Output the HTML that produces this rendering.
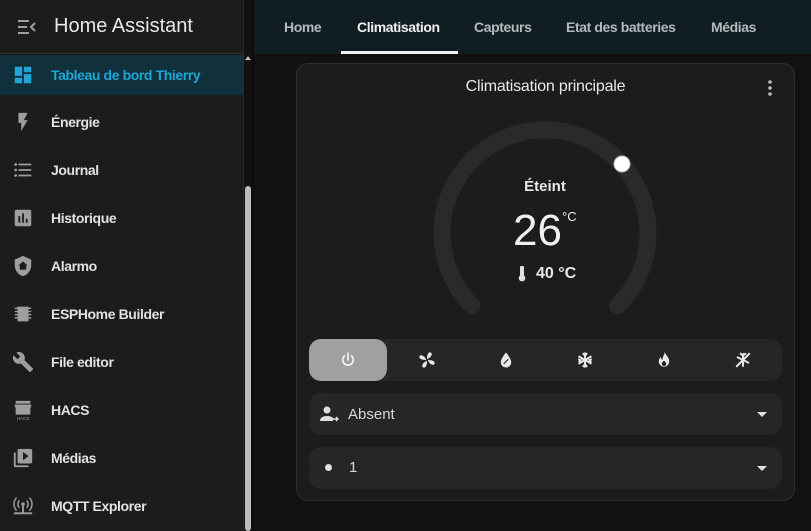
<!DOCTYPE html>
<html><head><meta charset="utf-8"><style>
*{margin:0;padding:0;box-sizing:border-box}
body{width:811px;height:531px;overflow:hidden;background:#111111;font-family:"Liberation Sans",sans-serif;position:relative;color:#e1e1e1}
.abs{position:absolute}
#side{left:0;top:0;width:244px;height:531px;background:#1c1c1c;border-right:1px solid #2a2a2a}
.nav{position:absolute;left:0;width:243px;height:40px;display:flex;align-items:center}
.nav svg{position:absolute;left:12px;width:22px;height:22px;fill:#9e9e9e}
.nav span{position:absolute;left:51px;font-size:14px;font-weight:bold;color:#e1e1e1;letter-spacing:-0.4px}
.tab{position:absolute;top:19px;font-size:14px;font-weight:bold;color:#b4b9bc;letter-spacing:-0.4px}
.row{position:absolute;left:309px;width:473px;height:42px;background:#262626;border-radius:12px}
.mb{position:absolute;top:0;width:78px;height:42px;display:flex;align-items:center;justify-content:center}
.mb svg{width:18px;height:18px;fill:#e8e8e8}
</style></head><body>
<div id="side" class="abs">
 <div class="abs" style="left:0;top:53px;width:243px;height:1px;background:#2e2e2e"></div>
 <svg class="abs" style="left:16px;top:17px" width="22" height="20" viewBox="0 0 22 20"><path d="M2 4h11M2 10h9M2 16h11" stroke="#9e9e9e" stroke-width="2"/><path d="M19 6l-4 4 4 4" stroke="#9e9e9e" stroke-width="2" fill="none"/></svg>
 <div class="abs" style="left:54px;top:15px;font-size:20px;color:#e8e8e8">Home Assistant</div>
 <div class="nav" style="top:55px;background:#10303b"><svg viewBox="0 0 24 24" style="fill:#1ea7d6"><path d="M13,3V9H21V3M13,21H21V11H13M3,21H11V15H3M3,13H11V3H3V13Z"/></svg><span style="color:#1ea7d6">Tableau de bord Thierry</span></div>
 <div class="nav" style="top:102px"><svg viewBox="0 0 24 24"><path d="M7,2V13H10V22L17,10H13L17,2H7Z"/></svg><span>Énergie</span></div>
 <div class="nav" style="top:150px"><svg viewBox="0 0 24 24"><path d="M7,5H21V7H7V5M7,13V11H21V13H7M4,4.5A1.5,1.5 0 0,1 5.5,6A1.5,1.5 0 0,1 4,7.5A1.5,1.5 0 0,1 2.5,6A1.5,1.5 0 0,1 4,4.5M4,10.5A1.5,1.5 0 0,1 5.5,12A1.5,1.5 0 0,1 4,13.5A1.5,1.5 0 0,1 2.5,12A1.5,1.5 0 0,1 4,10.5M7,19V17H21V19H7M4,16.5A1.5,1.5 0 0,1 5.5,18A1.5,1.5 0 0,1 4,19.5A1.5,1.5 0 0,1 2.5,18A1.5,1.5 0 0,1 4,16.5Z"/></svg><span>Journal</span></div>
 <div class="nav" style="top:198px"><svg viewBox="0 0 24 24"><path fill-rule="evenodd" d="M5 3H19A2 2 0 0 1 21 5V19A2 2 0 0 1 19 21H5A2 2 0 0 1 3 19V5A2 2 0 0 1 5 3ZM7 10V17H9V10ZM11 7V17H13V7ZM15 13V17H17V13Z"/></svg><span>Historique</span></div>
 <div class="nav" style="top:246px"><svg viewBox="0 0 24 24"><path fill-rule="evenodd" d="M12 1L3 5V11C3 16.5 6.8 21.7 12 23C17.2 21.7 21 16.5 21 11V5ZM12 7L7 11.5H8.5V16H15.5V11.5H17Z"/></svg><span>Alarmo</span></div>
 <div class="nav" style="top:294px"><svg viewBox="0 0 24 24"><path d="M6 4H18V20H6ZM3 5H6V6.5H3ZM3 8.5H6V10H3ZM3 12H6V13.5H3ZM3 15.5H6V17H3ZM18 5H21V6.5H18ZM18 8.5H21V10H18ZM18 12H21V13.5H18ZM18 15.5H21V17H18Z"/></svg><span>ESPHome Builder</span></div>
 <div class="nav" style="top:342px"><svg viewBox="0 0 24 24"><path d="M22.7,19L13.6,9.9C14.5,7.6 14,4.9 12.1,3C10.1,1 7.1,0.6 4.7,1.7L9,6L6,9L1.6,4.7C0.4,7.1 0.9,10.1 2.9,12.1C4.8,14 7.5,14.5 9.8,13.6L18.9,22.7C19.3,23.1 19.9,23.1 20.3,22.7L22.6,20.4C23.1,20 23.1,19.3 22.7,19Z"/></svg><span>File editor</span></div>
 <div class="nav" style="top:390px"><svg viewBox="0 0 24 24"><path d="M4 2H20V5H4ZM3 6H21V9H3ZM4 9H20V17H4Z"/><text x="12" y="23" font-size="5" fill="#9e9e9e" text-anchor="middle" font-family="Liberation Sans">HACS</text></svg><span>HACS</span></div>
 <div class="nav" style="top:438px"><svg viewBox="0 0 24 24"><path d="M4,6H2V20A2,2 0 0,0 4,22H18V20H4V6M20,2H8A2,2 0 0,0 6,4V16A2,2 0 0,0 8,18H20A2,2 0 0,0 22,16V4A2,2 0 0,0 20,2M12,14.5V5.5L18,10L12,14.5Z"/></svg><span>Médias</span></div>
 <div class="nav" style="top:486px"><svg viewBox="0 0 24 24"><circle cx="12" cy="10" r="2"/><path d="M8 6a6 6 0 0 0 0 8M16 6a6 6 0 0 1 0 8M5 3a10 10 0 0 0 0 14M19 3a10 10 0 0 1 0 14" stroke="#9e9e9e" stroke-width="1.6" fill="none"/><path d="M11 12H13V19H11ZM2 19H22V21H2Z"/></svg><span>MQTT Explorer</span></div>
 <div class="abs" style="left:245px;top:186px;width:6px;height:345px;background:#bdbdbd;border-radius:3px"></div>
 <div class="abs" style="left:245px;top:56px;width:0;height:0;border-left:3px solid transparent;border-right:3px solid transparent;border-bottom:4px solid #bdbdbd"></div>
</div>
<div class="abs" style="left:252px;top:0;width:2px;height:531px;background:#0c0c0c"></div>
<div class="abs" style="left:254px;top:0;width:557px;height:54px;background:#101e24"></div>
<div class="tab" style="left:284px">Home</div>
<div class="tab" style="left:357px;color:#f0f0f0">Climatisation</div>
<div class="tab" style="left:474px">Capteurs</div>
<div class="tab" style="left:566px">Etat des batteries</div>
<div class="tab" style="left:711px">Médias</div>
<div class="abs" style="left:341px;top:51px;width:117px;height:3px;background:#f0f0f0"></div>

<div class="abs" style="left:296px;top:63px;width:499px;height:438px;background:#1c1c1c;border:1px solid #2f2f2f;border-radius:12px"></div>
<div class="abs" style="left:296px;top:78px;width:499px;text-align:center;font-size:16px;color:#e8e8e8;letter-spacing:-0.2px">Climatisation principale</div>
<svg class="abs" style="left:764px;top:79px" width="12" height="18"><circle cx="6" cy="3" r="1.8" fill="#bdbdbd"/><circle cx="6" cy="9" r="1.8" fill="#bdbdbd"/><circle cx="6" cy="15" r="1.8" fill="#bdbdbd"/></svg>

<svg class="abs" style="left:0;top:0" width="811" height="531"><path d="M472.2 305.8 A103 103 0 1 1 617.8 305.8" stroke="#2a2a2a" stroke-width="17" fill="none" stroke-linecap="round"/><circle cx="622" cy="164" r="8" fill="#fff" stroke="#bbb" stroke-width="1"/></svg>
<div class="abs" style="left:445px;top:178px;width:200px;text-align:center;font-size:15px;font-weight:bold;color:#e8e8e8">Éteint</div>
<div class="abs" style="left:513px;top:205px;font-size:44px;color:#f0f0f0;line-height:52px">26</div>
<div class="abs" style="left:562px;top:209px;font-size:13px;color:#f0f0f0">°C</div>
<svg class="abs" style="left:517px;top:266px" width="10" height="16" viewBox="0 0 10 16"><path d="M3 1.5a2 2 0 0 1 4 0V9.5a3.3 3.3 0 1 1-4 0Z" fill="#e0e0e0"/></svg>
<div class="abs" style="left:536px;top:265px;font-size:16px;font-weight:bold;color:#e8e8e8">40 °C</div>

<div class="row" style="top:339px">
 <div class="mb" style="left:0;background:#a0a0a0;border-radius:12px"><svg viewBox="0 0 24 24"><path d="M12 3v9M7.5 6.5a7 7 0 1 0 9 0" stroke="#f5f5f5" stroke-width="2.2" fill="none" stroke-linecap="round"/></svg></div>
 <div class="mb" style="left:79px"><svg viewBox="0 0 24 24"><path d="M12 11C12 4 14 1 17 2C20 3 18 9 12 11ZM13 12C20 12 23 14 22 17C21 20 15 18 13 12ZM12 13C12 20 10 23 7 22C4 21 6 15 12 13ZM11 12C4 12 1 10 2 7C3 4 9 6 11 12Z"/></svg></div>
 <div class="mb" style="left:158px"><svg viewBox="0 0 24 24"><path d="M12 2C12 2 5 10 5 15a7 7 0 0 0 14 0C19 10 12 2 12 2Z"/><path d="M9 17l6-6" stroke="#262626" stroke-width="1.6"/></svg></div>
 <div class="mb" style="left:237px"><svg viewBox="0 0 24 24"><path d="M12 2V22M3.3 7L20.7 17M3.3 17L20.7 7M9 3L12 6 15 3M9 21L12 18 15 21M3 11L6 12 4 15M21 11L18 12 20 15" stroke="#e8e8e8" stroke-width="2.6" fill="none"/></svg></div>
 <div class="mb" style="left:316px"><svg viewBox="0 0 24 24"><path d="M13 1C14 6 19 8 19 14a7 7 0 0 1-14 0C5 10 8 8 8 8C8 11 10 12 10 12C10 7 13 5 13 1ZM12 20a3 3 0 0 0 3-3C15 15 12 13 12 13C12 13 9 15 9 17a3 3 0 0 0 3 3Z"/></svg></div>
 <div class="mb" style="left:395px"><svg viewBox="0 0 24 24"><path d="M3 21L21 3M12 3V21M4 8L20 16M8 3L12 6 16 3" stroke="#e8e8e8" stroke-width="2.6" fill="none"/></svg></div>
</div>
<div class="row" style="top:393px">
 <svg class="abs" style="left:11px;top:12px" width="20" height="18" viewBox="0 0 20 18"><circle cx="7" cy="5" r="3.5" fill="#e0e0e0"/><path d="M0 16c0-4 4-5 7-5s5 1 6 2v3Z" fill="#e0e0e0"/><path d="M13 14h5M16 12l2 2-2 2" stroke="#e0e0e0" stroke-width="1.4" fill="none"/></svg>
 <div class="abs" style="left:39px;top:13px;font-size:15px;color:#d8d8d8">Absent</div>
 <div class="abs" style="left:448px;top:19px;border-left:5px solid transparent;border-right:5px solid transparent;border-top:5px solid #e0e0e0"></div>
</div>
<div class="row" style="top:447px">
 <div class="abs" style="left:16px;top:17px;width:7px;height:7px;border-radius:50%;background:#e0e0e0"></div>
 <div class="abs" style="left:40px;top:12px;font-size:15px;color:#d8d8d8">1</div>
 <div class="abs" style="left:448px;top:19px;border-left:5px solid transparent;border-right:5px solid transparent;border-top:5px solid #e0e0e0"></div>
</div>
</body></html>
